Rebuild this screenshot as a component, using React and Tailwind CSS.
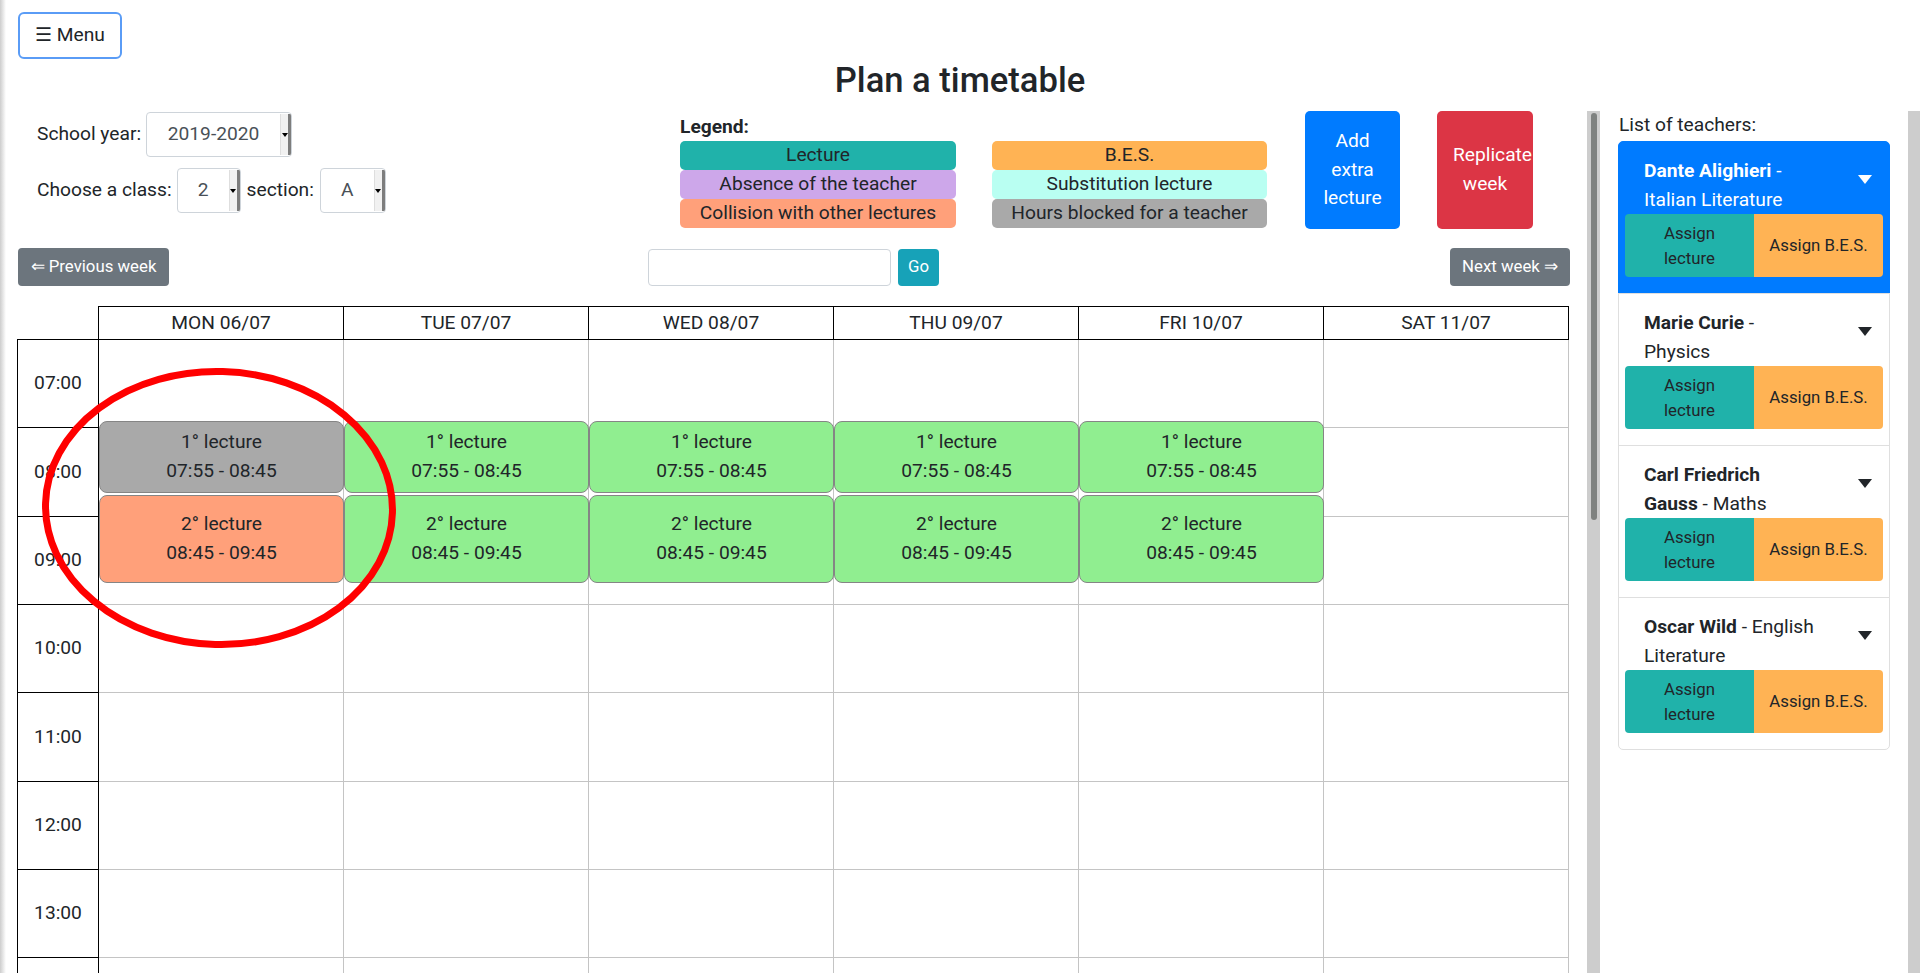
import React from "react";

const days = ["MON 06/07", "TUE 07/07", "WED 08/07", "THU 09/07", "FRI 10/07", "SAT 11/07"];
// the last row is only partly on screen, its label lies below the fold
const hours = ["07:00", "08:00", "09:00", "10:00", "11:00", "12:00", "13:00", ""];

// lectures per day: [first, second] colours, null = free day
const lectures = [
  ["bg-[#a9a9a9]", "bg-[#ffa07a]"],
  ["bg-[#90ee90]", "bg-[#90ee90]"],
  ["bg-[#90ee90]", "bg-[#90ee90]"],
  ["bg-[#90ee90]", "bg-[#90ee90]"],
  ["bg-[#90ee90]", "bg-[#90ee90]"],
  null,
];

const teachers = [
  { name: "Dante Alighieri", subject: "Italian Literature", active: true },
  { name: "Marie Curie", subject: "Physics" },
  { name: "Carl Friedrich Gauss", subject: "Maths" },
  { name: "Oscar Wild", subject: "English Literature" },
];

function Select({ value, width }) {
  return (
    <div className={`flex h-[45px] ${width} overflow-hidden rounded-[4px] border border-[#ced4da] bg-white`}>
      <div className="flex flex-1 items-center justify-center text-[19.2px] text-[#495057]">{value}</div>
      <div className="my-[1px] flex w-[11px] items-center justify-center border-l border-l-[#dedede] border-r-[3px] border-r-[#7d7d7d] bg-[#f1f1f1]">
        <span className="h-0 w-0 border-x-[3px] border-t-[4px] border-x-transparent border-t-black" />
      </div>
    </div>
  );
}

function LegendBox({ bg, label }) {
  return (
    <div className={`flex h-[29px] items-center justify-center overflow-hidden whitespace-nowrap rounded-[5px] text-[19.2px] text-[#212529] ${bg}`}>
      {label}
    </div>
  );
}

function Lecture({ bg, top, height, n, time }) {
  return (
    <div
      className={`absolute left-0 z-[1] flex w-[245px] flex-col items-center justify-center rounded-[8px] border border-[#858585] text-[19.2px] leading-[28.8px] text-[#212529] ${bg}`}
      style={{ top, height }}
    >
      <div>{n}° lecture</div>
      <div>{time}</div>
    </div>
  );
}

function TeacherItem({ t, first }) {
  return (
    <div
      className={`h-[153px] border pt-[15px] ${
        t.active ? "border-[#007bff] bg-[#007bff] text-white" : "border-[#dfdfdf] bg-white text-[#212529]"
      } ${first ? "rounded-t-[5px]" : "-mt-px"} last:rounded-b-[5px]`}
    >
      <div className="flex pl-[25px]">
        <div className="w-[171px] text-[19.2px] leading-[28.8px]">
          <b className="font-bold">{t.name}</b> - {t.subject}
        </div>
        <span
          className={`ml-[43px] mt-[18px] h-0 w-0 border-x-[7px] border-t-[9px] border-x-transparent ${
            t.active ? "border-t-white" : "border-t-[#212529]"
          }`}
        />
      </div>
      <div className="ml-[6px] flex h-[63px] w-[258px] text-[16.8px] leading-[25.2px] text-[#212529]">
        <div className="flex w-[129px] items-center justify-center rounded-l-[4px] bg-[#20b2aa] text-center">
          <span className="block w-[70px]">Assign lecture</span>
        </div>
        <div className="flex w-[129px] items-center justify-center rounded-r-[4px] bg-[#ffb354] px-[10px] text-center">
          Assign B.E.S.
        </div>
      </div>
    </div>
  );
}

export default function App() {
  return (
    <div className="relative h-[973px] w-[1920px] overflow-hidden bg-white font-[Roboto,sans-serif] text-[#212529]">
      <div className="pointer-events-none absolute inset-y-0 left-0 z-20 w-[6px] bg-linear-to-r from-[#cdcdcd] to-white/0" />

      {/* top bar */}
      <div className="h-[111px]">
        <div className="pl-[18px] pt-[12px]">
          <button className="h-[47px] w-[104px] rounded-[6px] border-2 border-[#5a9cf6] bg-white text-[19.2px] text-[#212529]">
            ☰ Menu
          </button>
        </div>
        <h1 className="text-center text-[34.6px] font-medium leading-[42px] text-[#212529]">Plan a timetable</h1>
      </div>

      <div className="flex h-[862px]">
        {/* main column */}
        <div className="flex w-[1600px]">
          <div className="flex-1 overflow-hidden">
            <div className="flex h-[118px] items-start">
              <div className="w-[680px] pl-[37px] pt-[1px] text-[19.2px]">
                <div className="flex items-center">
                  <span>School year:</span>
                  <div className="ml-[5px]">
                    <Select value="2019-2020" width="w-[146px]" />
                  </div>
                </div>
                <div className="mt-[11px] flex items-center">
                  <span>Choose a class:</span>
                  <div className="ml-[5px]">
                    <Select value="2" width="w-[64px]" />
                  </div>
                  <span className="ml-[6px]">section:</span>
                  <div className="ml-[6px]">
                    <Select value="A" width="w-[66px]" />
                  </div>
                </div>
              </div>

              <div className="w-[587px] pt-[1px]">
                <div className="h-[29px] text-[19.2px] font-bold leading-[29px]">Legend:</div>
                <div className="grid grid-cols-[276px_275px] gap-x-[36px]">
                  <LegendBox bg="bg-[#20b2aa]" label="Lecture" />
                  <LegendBox bg="bg-[#ffb354]" label="B.E.S." />
                  <LegendBox bg="bg-[#cda7ea]" label="Absence of the teacher" />
                  <LegendBox bg="bg-[#b9fff2]" label="Substitution lecture" />
                  <LegendBox bg="bg-[#ffa07a]" label="Collision with other lectures" />
                  <LegendBox bg="bg-[#a9a9a9]" label="Hours blocked for a teacher" />
                </div>
              </div>

              <button className="ml-[38px] flex h-[118px] w-[95px] items-center justify-center rounded-[5px] bg-[#007bff] px-[10px] text-center text-[19.2px] leading-[28.8px] text-white">
                Add extra lecture
              </button>
              <button className="ml-[37px] flex h-[118px] w-[96px] items-center overflow-hidden rounded-[5px] bg-[#dc3545] pl-[16px] text-[19.2px] leading-[28.8px] text-white">
                <span className="block w-[64px] text-center">Replicate week</span>
              </button>
            </div>

            <div className="mt-[19px] flex items-center pr-[17px]">
              <button className="ml-[18px] h-[38px] w-[151px] rounded-[4px] bg-[#6c757d] text-[16.8px] text-white">
                ⇐ Previous week
              </button>
              <div className="ml-[479px] h-[37px] w-[243px] rounded-[4px] border border-[#ced4da] bg-white" />
              <button className="ml-[7px] flex h-[37px] w-[41px] items-center justify-center rounded-[4px] bg-[#17a2b8] text-[16.8px] text-white">
                Go
              </button>
              <button className="ml-auto h-[38px] w-[120px] rounded-[4px] bg-[#6c757d] text-[16.8px] text-white">
                Next week ⇒
              </button>
            </div>

            {/* timetable */}
            <div className="ml-[17px] mt-[20px] text-[19.2px]">
              <div className="flex">
                <div className="h-[34px] w-[81px] border-b border-black" />
                {days.map((d, i) => (
                  <div
                    key={d}
                    className={`flex h-[34px] items-center justify-center border-y border-r border-black ${
                      i === 0 ? "w-[246px] border-l" : "w-[245px]"
                    }`}
                  >
                    {d}
                  </div>
                ))}
              </div>
              <div className="flex">
                <div className="w-[82px] border-x border-black">
                  {hours.map((h, k) => (
                    <div key={k} className="flex h-[88.33px] items-center justify-center border-b border-black">
                      {h}
                    </div>
                  ))}
                </div>
                {days.map((d, i) => (
                  <div key={d} className="relative w-[245px] border-r border-[#c4c4c4]">
                    {hours.map((h, k) => (
                      <div key={k} className="h-[88.33px] border-b border-[#c4c4c4]" />
                    ))}
                    {lectures[i] && (
                      <>
                        <Lecture bg={lectures[i][0]} top={81} height={72} n={1} time="07:55 - 08:45" />
                        <Lecture bg={lectures[i][1]} top={155} height={88} n={2} time="08:45 - 09:45" />
                      </>
                    )}
                  </div>
                ))}
              </div>
            </div>
          </div>
          <div className="w-[13px] bg-[#cdcdcd] pl-[4px] pt-[2px]">
            <div className="h-[407px] w-[6px] rounded-full bg-[#7f8280]" />
          </div>
        </div>

        {/* teachers */}
        <div className="flex w-[320px]">
          <div className="w-[308px] px-[18px]">
            <div className="pl-[1px] text-[19.2px] leading-[28.8px]">List of teachers:</div>
            <div className="mt-[1px]">
              {teachers.map((t, i) => (
                <TeacherItem key={t.name} t={t} first={i === 0} />
              ))}
            </div>
          </div>
          <div className="w-[12px] bg-[#cdcdcd]" />
        </div>
      </div>

      <svg className="pointer-events-none absolute left-0 top-0 z-10" width="1920" height="973">
        <ellipse cx="219" cy="508" rx="173.5" ry="136.5" fill="none" stroke="#ff0000" strokeWidth="7" transform="rotate(1.6 219 508)" />
      </svg>
    </div>
  );
}
